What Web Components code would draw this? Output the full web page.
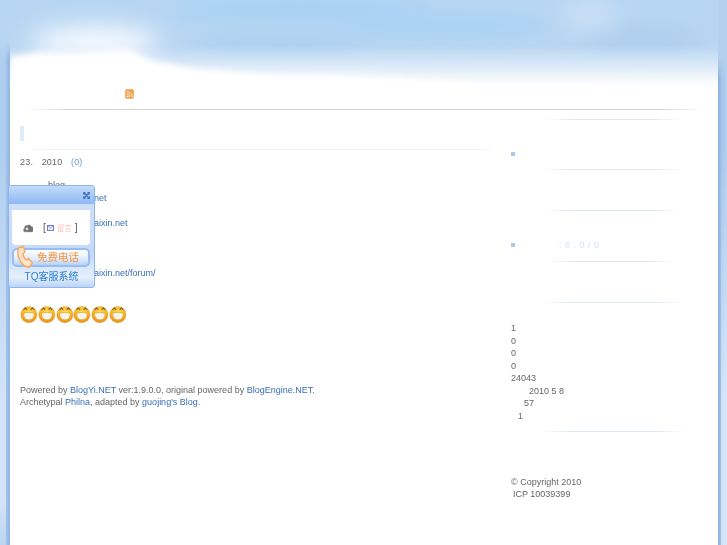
<!DOCTYPE html>
<html lang="zh">
<head>
<meta charset="utf-8">
<title>blog</title>
<style>
html,body { margin:0; padding:0; background:#fff; }
</style>
</head>
<body>
<blog-page>
  <blog-post slot="main"></blog-post>
  <blog-sidebar slot="side"></blog-sidebar>
</blog-page>
<tq-widget></tq-widget>

<script>
/* Page shell: sky header + two white columns */
const PAGE = document.createElement('template');
PAGE.innerHTML = `
<style>
:host {
  display:block;
  position:relative;
  width:727px;
  height:545px;
  overflow:hidden;
  font:9px/12.5px "Liberation Sans",Arial,sans-serif;
  color:#666;
  background:
    linear-gradient(to bottom,rgba(255,255,255,0) 150px,rgba(255,255,255,.45) 400px,rgba(255,255,255,.45) 500px,rgba(255,255,255,.15) 545px) left top/6px 100% no-repeat,
    linear-gradient(to bottom,rgba(255,255,255,0) 150px,rgba(255,255,255,.5) 400px,rgba(255,255,255,.5) 545px) right top/6px 100% no-repeat,
    linear-gradient(to right,#b0cef0 0,#b0cef0 5px,#8fb5e2 9px,#a4c3e9 10px) left top/10px 100% no-repeat,
    linear-gradient(to right,#8fb3de 0,#92b6e0 1px,#a5c6ea 4px,#b4d0ef 9px) right top/9px 100% no-repeat,
    #fff;
}
header {
  position:relative;
  height:110px;
  box-sizing:border-box;
  padding:89px 0 0 125px;
}
header svg.sky { position:absolute; left:0; top:0; }
.rss { position:relative; display:block; }
.columns {
  margin:0 9px 0 10px;
  background:#fff;
  display:grid;
  grid-template-columns:490px 1fr;
  height:435px;
  filter:blur(.3px);
}
::slotted([slot=main]) { display:block; padding-left:10px; }
::slotted([slot=side]) { display:block; padding-left:11px; }
</style>
<header>
  <svg class="sky" width="727" height="110" viewBox="0 0 727 110">
    <defs>
      <linearGradient id="base" gradientUnits="userSpaceOnUse" x1="0" y1="0" x2="0" y2="110">
        <stop offset="0" stop-color="#b6d6f3"/>
        <stop offset="1" stop-color="#bcd6f1"/>
      </linearGradient>
      <linearGradient id="sideL" gradientUnits="userSpaceOnUse" x1="0" y1="42" x2="0" y2="60">
        <stop offset="0" stop-color="#b6d6f3"/>
        <stop offset="1" stop-color="#b6d6f3" stop-opacity="0"/>
      </linearGradient>
      <linearGradient id="sideR" gradientUnits="userSpaceOnUse" x1="0" y1="58" x2="0" y2="78">
        <stop offset="0" stop-color="#b4d0ee"/>
        <stop offset="1" stop-color="#b4d0ee" stop-opacity="0"/>
      </linearGradient>
      <linearGradient id="fade" gradientUnits="userSpaceOnUse" x1="0" y1="46" x2="0" y2="86">
        <stop offset="0" stop-color="#fff" stop-opacity="0"/>
        <stop offset=".6" stop-color="#fff" stop-opacity=".6"/>
        <stop offset="1" stop-color="#fff"/>
      </linearGradient>
      <linearGradient id="rule" x1="0" y1="0" x2="1" y2="0">
        <stop offset="0" stop-color="#ddd" stop-opacity="0"/>
        <stop offset=".06" stop-color="#d8d8d8"/>
        <stop offset=".94" stop-color="#d8d8d8"/>
        <stop offset="1" stop-color="#ddd" stop-opacity="0"/>
      </linearGradient>
      <filter id="soft" filterUnits="userSpaceOnUse" x="-60" y="-80" width="850" height="270"><feGaussianBlur stdDeviation="9"/></filter>
      <filter id="softer" filterUnits="userSpaceOnUse" x="-60" y="-80" width="850" height="270"><feGaussianBlur stdDeviation="12"/></filter>
      <filter id="edge" filterUnits="userSpaceOnUse" x="-60" y="-80" width="850" height="270"><feGaussianBlur stdDeviation="3"/></filter>
      <clipPath id="inner"><rect x="10" y="0" width="708" height="110"/></clipPath>
    </defs>
    <rect x="0" y="0" width="10" height="60" fill="url(#sideL)"/>
    <rect x="718" y="0" width="9" height="80" fill="url(#sideR)"/>
    <rect x="10" width="708" height="110" fill="url(#base)"/>
    <ellipse cx="300" cy="10" rx="130" ry="12" fill="#a8d1f3" filter="url(#soft)"/>
    <ellipse cx="440" cy="26" rx="110" ry="11" fill="#a9d2f4" filter="url(#soft)"/>
    <ellipse cx="280" cy="42" rx="90" ry="9" fill="#abd0f0" filter="url(#soft)"/>
    <ellipse cx="640" cy="38" rx="60" ry="14" fill="#afcfee" filter="url(#soft)"/>
    <ellipse cx="590" cy="14" rx="28" ry="20" fill="#c6ddf4" filter="url(#soft)"/>
    <g clip-path="url(#inner)">
      <ellipse cx="95" cy="42" rx="65" ry="15" fill="#fbfdff" filter="url(#softer)"/>
      <path d="M10 110V46H727V110Z" fill="url(#fade)"/>
      <path d="M10 110V57L40 52 70 53 112 51 125 49 135 52 150 60 190 68 260 74 340 76 400 78 480 86 560 86 640 88 718 92V110Z" fill="#fff" filter="url(#edge)"/>
      <rect x="10" y="92" width="708" height="18" fill="#fff"/>
    </g>
    <rect x="24" y="109" width="682" height="1" fill="url(#rule)"/>
  </svg>
  <svg class="rss" width="9" height="10" viewBox="0 0 9 10">
    <rect x=".5" y=".5" width="8" height="9" rx="1" fill="#f79a45" stroke="#f3b77c"/>
    <circle cx="2.6" cy="7.4" r=".9" fill="#fff"/>
    <path d="M1.8 4.8a3.2 3.2 0 0 1 3.2 3.2M1.8 2.6a5.400 5.400 0 0 1 5.400 5.400" fill="none" stroke="#fff" stroke-width=".9"/>
  </svg>
</header>
<div class="columns">
  <slot name="main"></slot>
  <slot name="side"></slot>
</div>`;

class BlogPage extends HTMLElement {
  constructor() {
    super();
    this.attachShadow({mode:'open'}).appendChild(PAGE.content.cloneNode(true));
  }
}
customElements.define('blog-page',BlogPage);

/* Smiley used in the post body */
const GRIN = document.createElement('template');
GRIN.innerHTML = `
<style>:host { display:block; width:17.8px; height:18px; }</style>
<svg width="18" height="18" viewBox="0 0 18 18">
  <defs>
    <radialGradient id="face" cx=".5" cy=".35" r=".7">
      <stop offset="0" stop-color="#ffdf50"/>
      <stop offset=".55" stop-color="#fdb825"/>
      <stop offset="1" stop-color="#e0820a"/>
    </radialGradient>
  </defs>
  <circle cx="8.9" cy="9.6" r="8.1" fill="url(#face)" stroke="#d8902a" stroke-width=".4"/>
  <path d="M3.6 4.8 5.400 2.800 7.200 4.800M10.600 4.800 12.400 2.800 14.200 4.800" fill="none" stroke="#7d6238" stroke-width="1.200"/>
  <path d="M3.600 8.200Q8.900 7.200 14.200 8.200 14.400 14.600 8.900 14.800 3.400 14.600 3.600 8.200Z" fill="#fff" stroke="#c08a2c" stroke-width=".5"/>
  <path d="M5.800 8v6M8 7.800v6.800M10.200 7.800v6.800M12.300 8v6M3.800 11h10.200" stroke="#e3d6bd" stroke-width=".4" fill="none"/>
</svg>`;

class GrinFace extends HTMLElement {
  constructor() {
    super();
    this.attachShadow({mode:'open'}).appendChild(GRIN.content.cloneNode(true));
  }
}
customElements.define('grin-face',GrinFace);

/* Left column */
const POST = document.createElement('template');
POST.innerHTML = `
<style>
a { color:#3a6fb8; text-decoration:none; }
.title { height:39px; padding-top:16px; box-sizing:border-box; }
.bar { width:4px; height:15px; background:#dfeafa; }
.rule { height:1px; margin:0 10px 0 12px; background:linear-gradient(to right,#f8f6e8,#ededf5 10%,#ededf5 95%,#f6f6fa); }
.meta { margin-top:6px; height:23px; letter-spacing:.2px; }
.meta span { margin-right:8.500px; }
.meta a { color:#6f9bd8; }
.lines { height:112px; }
.lines div { height:12.5px; }
.in { padding-left:74px; }
.smileys { display:flex; height:74px; margin-top:14px; }
.foot { margin-top:5px; line-height:12px; }
</style>
<div class="title"><div class="bar"></div></div>
<div class="rule"></div>
<div class="meta"><span>23.</span><span>2010</span><a href="#">(0)</a></div>
<div class="lines">
  <div style="padding-left:28px">blog</div>
  <div class="in"><a href="#">net</a></div>
  <div></div>
  <div class="in"><a href="#">aixin.net</a></div>
  <div></div>
  <div></div>
  <div></div>
  <div class="in"><a href="#">aixin.net/forum/</a></div>
</div>
<div class="smileys"><grin-face></grin-face><grin-face></grin-face><grin-face></grin-face><grin-face></grin-face><grin-face></grin-face><grin-face></grin-face></div>
<div class="foot">
  <div>Powered by <a href="#">BlogYi.NET</a> ver:1.9.0.0, original powered by <a href="#">BlogEngine.NET</a>.</div>
  <div>Archetypal <a href="#">Philna</a>, adapted by <a href="#">guojing's Blog</a>.</div>
</div>`;

class BlogPost extends HTMLElement {
  constructor() {
    super();
    this.attachShadow({mode:'open'}).appendChild(POST.content.cloneNode(true));
  }
}
customElements.define('blog-post',BlogPost);

/* Right column */
const SIDE = document.createElement('template');
SIDE.innerHTML = `
<style>
.line { height:1px; background:linear-gradient(to right,rgba(220,232,244,0),#dfe9f3 20%,#dfe9f3 80%,rgba(220,232,244,0)); }
.row { display:flex; align-items:center; }
.dot { width:4px; height:4px; background:#a9c9ec; }
.pale { color:#cfe2f8; margin-left:44px; letter-spacing:.5px; }
.stats div { height:12.5px; }
.copy { margin-top:44px; line-height:12px; }
</style>
<div class="line" style="margin:9px 37px 0 34px"></div>
<div class="row" style="margin:31px 0 0 0;height:6px"><span class="dot"></span></div>
<div class="line" style="margin:12px 32px 0 29px"></div>
<div class="line" style="margin:40px 37px 0 32px"></div>
<div class="row" style="margin:31px 0 0 0;height:6px"><span class="dot"></span><span class="pale">: 0 : 0 / 0</span></div>
<div class="line" style="margin:13px 42px 0 37px"></div>
<div class="line" style="margin:40px 32px 0 30px"></div>
<div class="stats" style="margin-top:19px">
  <div>1</div><div>0</div><div>0</div><div>0</div><div>24043</div>
  <div style="padding-left:18px">2010 5 8</div>
  <div style="padding-left:13px">57</div>
  <div style="padding-left:7px">1</div>
</div>
<div class="line" style="margin:9px 32px 0 29px"></div>
<div class="copy">
  <div>© Copyright 2010</div>
  <div style="padding-left:2px">ICP 10039399</div>
</div>`;

class BlogSidebar extends HTMLElement {
  constructor() {
    super();
    this.attachShadow({mode:'open'}).appendChild(SIDE.content.cloneNode(true));
  }
}
customElements.define('blog-sidebar',BlogSidebar);

/* Floating customer service box, sits over the post */
const TQ = document.createElement('template');
TQ.innerHTML = `
<style>
:host {
  position:absolute;
  left:8px;
  top:185px;
  width:87px;
  height:103px;
  box-sizing:border-box;
  border:1px solid #8fb5f0;
  border-radius:3px;
  background:linear-gradient(to bottom,#cfe0f9,#c6daf8 70%,#e6f0fc 90%,#bcd4f6);
  font-family:"Liberation Sans","Noto Sans CJK SC",sans-serif;
  display:flex;
  flex-direction:column;
  overflow:hidden;
  filter:blur(.3px);
}
.top {
  height:18px;
  flex:none;
  background:linear-gradient(to bottom,#c3dafa,#8fb9f4);
  display:flex;
  justify-content:flex-end;
  align-items:center;
  padding-right:4px;
}
.msg {
  width:78px;
  height:35px;
  margin:6px 0 0 3px;
  background:#fff;
  border-radius:0 0 4px 4px;
  display:flex;
  align-items:center;
  font-size:10px;
  color:#555;
  box-sizing:border-box;
  padding-left:11px;
}
.msg .b { margin:0 1px 0 10px; }
.msg .pk { color:#fcc4c4; font-size:7.5px; margin:0 3px; }
.call {
  position:relative;
  width:78px;
  height:19px;
  margin:3px 0 0 3px;
  box-sizing:border-box;
  border:2px solid #97bdf3;
  border-radius:5px;
  background:linear-gradient(to bottom,#fff,#e3eefc 55%,#b8d2f6);
  color:#f8923a;
  font-size:10.5px;
  line-height:15px;
  padding-left:23px;
  white-space:nowrap;
}
.call svg { position:absolute; left:3px; top:-4px; }
.name { margin-top:3px; font-size:10px; color:#2b80d8; line-height:14px; text-align:center; }
</style>
<div class="top">
  <svg width="7" height="7" viewBox="0 0 7 7"><path d="M.5 .5 6.5 6.5M6.5 .5 .5 6.5M.5 .5h2M.5 .5v2M6.5 6.5h-2M6.5 6.5v-2M6.5 .5h-2M6.5 .5v2M.5 6.5h2M.5 6.5v-2" stroke="#4070c0" stroke-width="1.300" fill="none"/></svg>
</div>
<div class="msg">
  <svg width="10" height="10" viewBox="0 0 10 9"><path d="M2 8.5a2 2 0 0 1-.5-3.800 2.400 2.400 0 0 1 3-2.800 2.500 2.500 0 0 1 4 1.200 2.400 2.400 0 0 1 0 5.400Z" fill="#707070" stroke="#aaa" stroke-width=".5"/><circle cx="4" cy="5.400" r="1.400" fill="#ddd"/></svg>
  <span class="b">[</span>
  <svg width="7" height="6" viewBox="0 0 7 6"><rect x=".5" y=".5" width="6" height="5" fill="#eef" stroke="#6f7fd0"/><path d="M.5 .5 3.500 3 6.500 .5" fill="none" stroke="#6f7fd0" stroke-width=".7"/></svg>
  <span class="pk">留言</span>
  <span>]</span>
</div>
<div class="call">
  <svg width="16" height="22" viewBox="0 0 16 22"><path d="M1.500 2 6.500 .5 8 6 6 7.500Q6 11 9.500 14L11.500 12.500 15.500 17 12 21.500Q4.500 20.500 1.500 11 .2 6 1.500 2Z" fill="#fde3c8" stroke="#f5a862" stroke-width="1.400"/></svg>
  免费电话
</div>
<div class="name">TQ客服系统</div>`;

class TqWidget extends HTMLElement {
  constructor() {
    super();
    this.attachShadow({mode:'open'}).appendChild(TQ.content.cloneNode(true));
  }
}
customElements.define('tq-widget',TqWidget);
</script>
</body>
</html>
